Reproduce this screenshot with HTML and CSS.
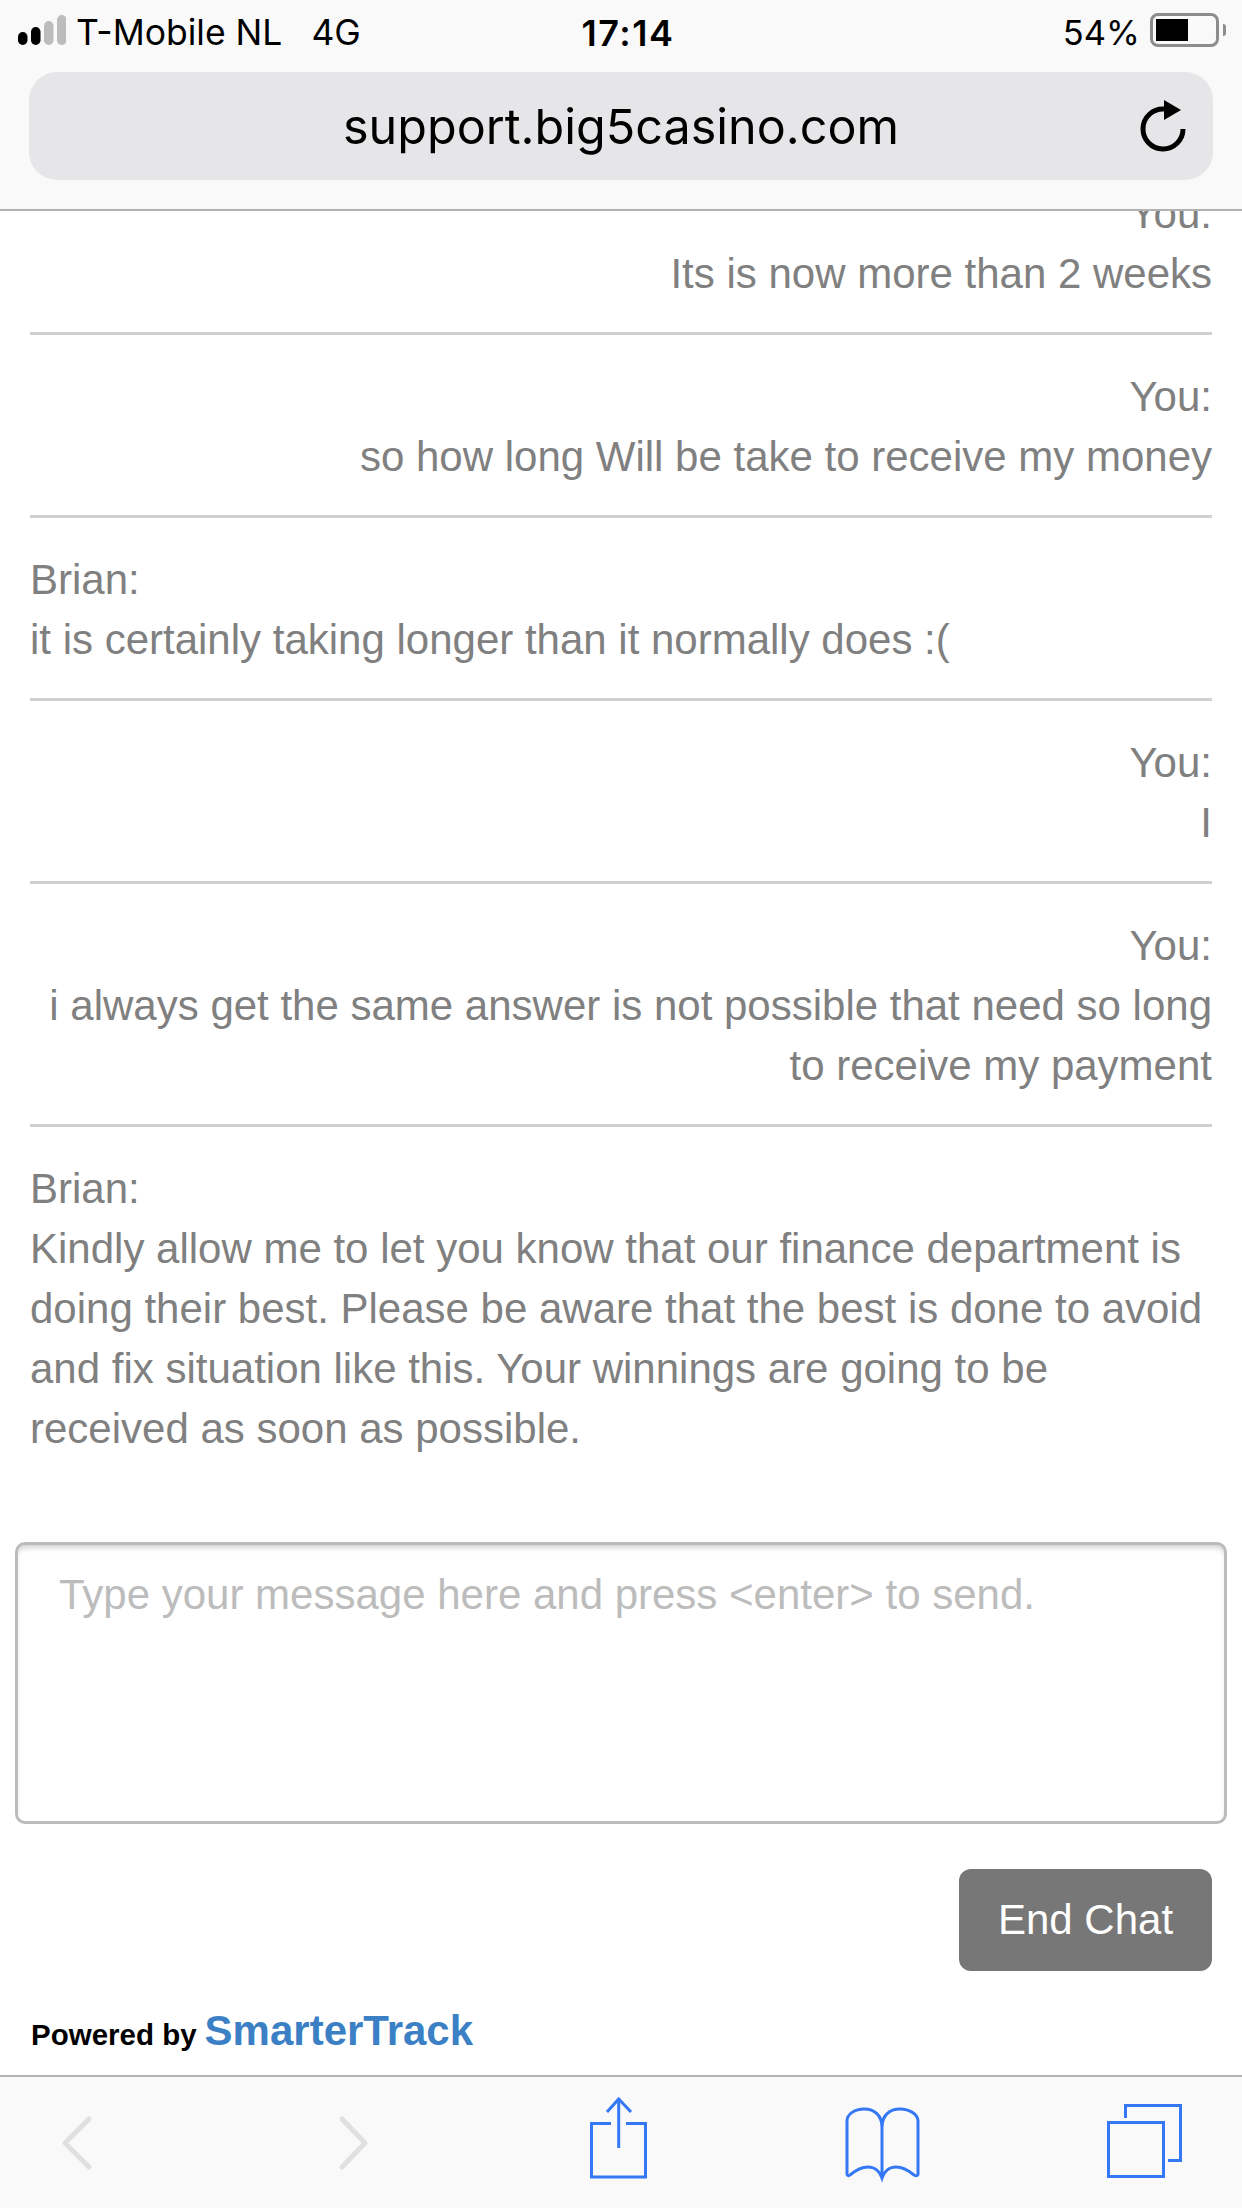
FILE: index.html
```html
<!DOCTYPE html>
<html lang="en">
<head>
    <meta charset="UTF-8">
    <meta name="viewport" content="width=device-width, initial-scale=1.0">
    <title>support.big5casino.com</title>
    <link rel="stylesheet" href="styles.css">
</head>
<body>

    <!-- Browser header -->
    <header class="browser-top">
        <div class="status-bar">
            <div class="status-left">
                <svg class="signal" width="48" height="30" viewBox="0 0 48 30">
                    <rect x="0" y="17" width="9.500" height="13" rx="4.700" fill="#000"/>
                    <rect x="13" y="12" width="9.500" height="18" rx="4.700" fill="#000"/>
                    <rect x="26" y="6" width="9.500" height="24" rx="4.700" fill="#bcbcbc"/>
                    <rect x="39" y="0" width="9.500" height="30" rx="4.700" fill="#bcbcbc"/>
                </svg>
                <span class="status-text carrier">T-Mobile NL</span>
                <span class="status-text">4G</span>
            </div>
            <div class="status-text clock">17:14</div>
            <div class="status-right">
                <span class="status-text battery-text">54%</span>
                <div class="battery"><div class="battery-fill"></div></div>
                <div class="battery-tip"></div>
            </div>
        </div>
        <div class="url-bar">
            <span class="url-text">support.big5casino.com</span>
            <svg class="reload" width="50" height="58" viewBox="0 0 50 58">
                <path d="M26 11 A20 20 0 1 0 45 31" fill="none" stroke="#000" stroke-width="5"/>
                <path d="M26 2 L43 12 L26 22 Z" fill="#000"/>
            </svg>
        </div>
    </header>

    <main class="chat">
        <!-- Messages, pinned to the bottom of the log -->
        <div class="log">
            <div class="msg msg-you">
                <div>You:</div>
                <div>Its is now more than 2 weeks</div>
            </div>
            <div class="msg msg-you">
                <div>You:</div>
                <div>so how long Will be take to receive my money</div>
            </div>
            <div class="msg">
                <div>Brian:</div>
                <div>it is certainly taking longer than it normally does :(</div>
            </div>
            <div class="msg msg-you">
                <div>You:</div>
                <div>I</div>
            </div>
            <div class="msg msg-you">
                <div>You:</div>
                <div>i always get the same answer is not possible that need so long to receive my payment</div>
            </div>
            <div class="msg msg-last">
                <div>Brian:</div>
                <div>Kindly allow me to let you know that our finance department is doing their best. Please be aware that the best is done to avoid and fix situation like this. Your winnings are going to be received as soon as possible.</div>
            </div>
        </div>

        <textarea class="input-box" placeholder="Type your message here and press <enter> to send."></textarea>

        <div class="actions">
            <button class="end-btn">End Chat</button>
        </div>

        <div class="powered">
            <span class="powered-by">Powered by</span>
            <a class="brand">SmarterTrack</a>
        </div>
    </main>

    <!-- Browser toolbar -->
    <footer class="toolbar">
        <svg class="tool" width="1242" height="131" viewBox="0 0 1242 131">
            <!-- back, forward -->
            <g fill="none" stroke="#e0e0e0" stroke-width="5" stroke-linecap="round" stroke-linejoin="round">
                <path d="M89 42 L65 66 L89 90"/>
                <path d="M342 42 L365 66 L342 90"/>
            </g>
            <g fill="none" stroke="#3478f6" stroke-width="3">
                <!-- share -->
                <path d="M618.700 71 V23"/>
                <path d="M607 35 L618.700 22 L631 35"/>
                <path d="M611 46.500 H591.500 V100 H645.500 V46.500 H626"/>
                <!-- bookmarks -->
                <path d="M882 100 V50 C882 39 875 32 864 32 C855 32 847 37 847 44 V97 C847 99 849 99 850 98 C856 93 862 90 868 90 C875 90 880 95 882 101 C884 95 889 90 896 90 C902 90 908 93 914 98 C915 99 918 99 918 97 V44 C918 37 909 32 900 32 C889 32 882 39 882 50"/>
                <!-- tabs -->
                <path d="M1125.500 41 V28.500 H1180.500 V83.500 H1168"/>
                <rect x="1108.500" y="45.500" width="55" height="54"/>
            </g>
        </svg>
    </footer>

</body>
</html>
```

FILE: styles.css
```css
* {
    box-sizing: border-box;
}

body {
    margin: 0;
    width: 1242px;
    height: 2208px;
    background-color: white;
    display: flex;
    flex-direction: column;
    overflow: hidden;
    font-family: "Liberation Sans", Arial, sans-serif;
}

/* Browser header */
.browser-top {
    height: 211px;
    flex: none;
    background-color: #f9f9f9;
    border-bottom: 2px solid #b2b2b2;
    font-family: Inter, sans-serif;
    color: black;
}

.status-bar {
    height: 60px;
    padding: 0 16px 0 18px;
    margin-bottom: 12px;
    display: grid;
    grid-template-columns: 1fr auto 1fr;
    align-items: center;
    font-size: 35.500px;
}

.status-text {
    padding-top: 5px;
}

.status-left {
    display: flex;
    align-items: center;
}

.signal {
    margin-right: 10px;
}

.carrier {
    margin-right: 29px;
}

.clock {
    margin-left: 12px;
    font-size: 36px;
    font-weight: 600;
    letter-spacing: 1.500px;
}

.status-right {
    display: flex;
    align-items: center;
    justify-content: flex-end;
}

.battery-text {
    margin-right: 10px;
    font-size: 34.500px;
}

.battery {
    width: 69px;
    height: 34px;
    border: 3px solid #8c8c8c;
    border-radius: 8px;
    padding: 3px;
}

.battery-fill {
    width: 32px;
    height: 100%;
    background-color: black;
}

.battery-tip {
    width: 3px;
    height: 12px;
    margin-left: 4px;
    background-color: #8c8c8c;
    border-radius: 0 3px 3px 0;
}

.url-bar {
    height: 108px;
    margin: 0 29px;
    background-color: #e6e6e8;
    border-radius: 28px;
    display: flex;
    align-items: center;
    justify-content: center;
    position: relative;
}

.url-text {
    font-size: 48.500px;
}

.reload {
    position: absolute;
    right: 25px;
    top: 26px;
}

/* Chat */
.chat {
    flex: 1;
    display: flex;
    flex-direction: column;
    min-height: 0;
}

.log {
    height: 1331px;
    flex: none;
    padding: 0 30px;
    overflow: hidden;
    display: flex;
    flex-direction: column;
    justify-content: flex-end;
    color: #808080;
    font-size: 42px;
    line-height: 60px;
}

.msg {
    padding: 32px 0 28px;
    border-bottom: 3px solid #d0d0d0;
    flex: none;
}

.msg-you {
    text-align: right;
}

.msg-last {
    border-bottom: none;
    padding-bottom: 83px;
}

.input-box {
    display: block;
    margin: 0 15px;
    width: 1212px;
    height: 282px;
    padding: 20px 41px;
    border: 3px solid #bbb;
    border-radius: 10px;
    box-shadow: inset 0 5px 6px -3px rgba(0, 0, 0, 0.22);
    font-family: inherit;
    font-size: 42px;
    line-height: 60px;
    resize: none;
    outline: none;
    flex: none;
}

.input-box::placeholder {
    color: #bcbcbc;
    opacity: 1;
}

.actions {
    display: flex;
    justify-content: flex-end;
    padding: 45px 30px 0;
}

.end-btn {
    width: 253px;
    height: 102px;
    background-color: #777;
    color: white;
    border: none;
    border-radius: 12px;
    font-family: inherit;
    font-size: 42px;
    padding: 0;
}

.powered {
    padding: 36px 31px 0;
    display: flex;
    align-items: baseline;
    gap: 8px;
}

.powered-by {
    font-size: 29.500px;
    font-weight: bold;
    color: black;
}

.brand {
    font-size: 42px;
    font-weight: bold;
    color: #3b80c4;
}

/* Browser toolbar */
.toolbar {
    height: 133px;
    flex: none;
    background-color: #f9f9f9;
    border-top: 2px solid #b2b2b2;
}

.tool {
    display: block;
}
```
